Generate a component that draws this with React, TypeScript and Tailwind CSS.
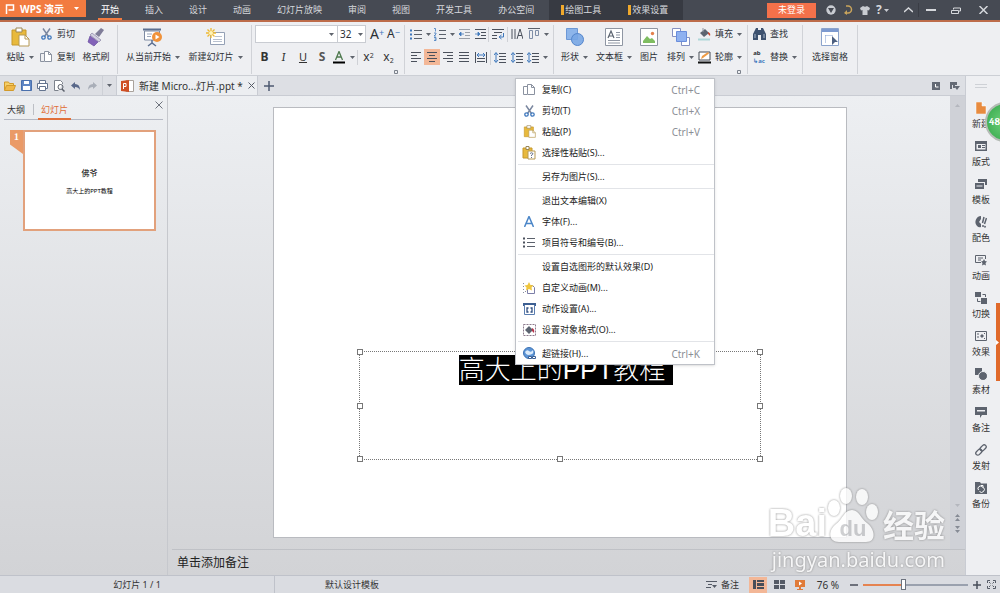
import type { ReactNode } from 'react';
import { useState } from 'react';

type SvgProps = { w: number; h: number; children: ReactNode; className?: string };

const Svg = ({ w, h, children, className = '' }: SvgProps) => (
  <svg width={w} height={h} viewBox={`0 0 ${w} ${h}`} fill="none" className={`shrink-0 ${className}`} aria-hidden="true">
    {children}
  </svg>
);

const Caret = ({ className = 'text-[#5f646d]' }: { className?: string }) => (
  <Svg w={5} h={3} className={className}>
    <path d="M0 0h5L2.500 3z" fill="currentColor" />
  </Svg>
);

const Divider = () => <div className="h-[15px] w-px shrink-0 bg-[#cfd1d6]" />;

/* ---------- Icons ---------- */

const PasteIcon = ({ size = 20 }: { size?: number }) => (
  <svg width={size} height={size} viewBox="0 0 20 20" fill="none" className="shrink-0" aria-hidden="true">
    <path d="M2 3h14v15H2z" fill="#e8b93c" stroke="#c6982a" />
    <path d="M6 1h6v4H6z" fill="#fff" stroke="#9a8756" />
    <path d="M9 8h6l4 4v7H9z" fill="#fff" stroke="#b79a55" />
    <path d="M15 8v4h4" stroke="#b79a55" />
  </svg>
);

const PasteSpecialIcon = () => (
  <Svg w={14} h={14}>
    <path d="M1 2h9v10H1z" fill="#e8b93c" stroke="#c6982a" />
    <path d="M4 .500h3v3H4z" fill="#fff" stroke="#9a8756" />
    <path d="M6 5h7v8H6z" fill="#fff" stroke="#b79a55" />
    <path d="M8 7.500q1.500-1.500 3 0q0 1-1.500 1.500v1M9.500 11v1" stroke="#69758c" />
  </Svg>
);

const ScissorsIcon = () => (
  <Svg w={11} h={12}>
    <path d="M2 0.500l5.500 8M9 0.500L3.500 8.500" stroke="#7b88a0" strokeWidth="1.500" />
    <circle cx="2.500" cy="9.500" r="1.700" stroke="#3f78bd" strokeWidth="1.300" />
    <circle cx="8.500" cy="9.500" r="1.700" stroke="#3f78bd" strokeWidth="1.300" />
  </Svg>
);

const CopyIcon = () => (
  <Svg w={12} h={12}>
    <path d="M4 2.500H.500v8H4" stroke="#8b92a0" />
    <path d="M4.500.500h4l3 3v7h-7z" fill="#fff" stroke="#8b92a0" />
    <path d="M8.500.500v3h3" stroke="#8b92a0" />
  </Svg>
);

const BrushIcon = () => (
  <Svg w={18} h={20}>
    <path d="M14 1l3 2-5 7-4-3z" fill="#7f7d98" />
    <path d="M5 6l9 7-2 2-9-7z" fill="#d3d0e2" stroke="#8a85a5" strokeWidth=".700" />
    <path d="M3 9l8 6-4 4-6-4z" fill="#8262b8" stroke="#6a4fa0" strokeWidth=".700" />
  </Svg>
);

const PlayFromIcon = () => (
  <Svg w={20} h={19}>
    <path d="M0 1.500h18" stroke="#5c6f91" strokeWidth="2" />
    <path d="M1.500 3v9h15V3z" fill="#fff" stroke="#7d8aa2" />
    <path d="M4 6h5M4 8.500h4" stroke="#9ba6ba" />
    <path d="M9 12v3M5 18l4-3 4 3" stroke="#5c6f91" strokeWidth="1.500" />
    <circle cx="14" cy="9" r="5" fill="#f0923a" />
    <path d="M12.500 6.500v5l4-2.500z" fill="#fff" />
  </Svg>
);

const NewSlideIcon = () => (
  <Svg w={20} h={18}>
    <path d="M4.500 4.500h14v12h-14z" fill="#fff" stroke="#94a0b5" />
    <path d="M9 8.500h7M7 11.500h9M7 13.500h9" stroke="#b9c1d0" />
    <path d="M5 0v10M0 5h10M1.500 1.500l7 7M8.500 1.500l-7 7" stroke="#eeb933" strokeWidth="1.300" />
    <circle cx="5" cy="5" r="2" fill="#fff4b8" />
  </Svg>
);

const ShapesIcon = () => (
  <Svg w={18} h={18}>
    <path d="M.500.500h11v11H.500z" fill="#8db5ea" stroke="#6c98d6" />
    <circle cx="11.500" cy="11.500" r="6" fill="#78a6e4" fillOpacity=".9" stroke="#5486cc" />
  </Svg>
);

const TextBoxIcon = () => (
  <Svg w={18} h={18}>
    <path d="M.500.500h17v17H.500z" fill="#fff" stroke="#8f96a3" />
    <path d="M3 10L6 3l3 7M4 8h4" stroke="#5c6470" strokeWidth="1.200" />
    <path d="M11 4.500h4M11 7h4M11 9.500h4M3 12.500h12M3 15h12" stroke="#8f96a3" />
  </Svg>
);

const PictureIcon = () => (
  <Svg w={18} h={18}>
    <path d="M.500.500h17v17H.500z" fill="#fff" stroke="#8f96a3" />
    <path d="M3 15v-2l4-5 3 3 2-1 3 3v2z" fill="#7fbd61" />
    <circle cx="12.500" cy="5.500" r="1.700" fill="#e4804c" />
  </Svg>
);

const ArrangeIcon = () => (
  <Svg w={18} h={18}>
    <path d="M.500.500h8v8h-8z" fill="#fff" stroke="#8591c2" />
    <path d="M9.500 9.500h8v8h-8z" fill="#fff" stroke="#8591c2" />
    <path d="M4.500 3.500h10v10h-10z" fill="#8fb1f0" stroke="#6a8ddb" />
  </Svg>
);

const FillIcon = () => (
  <Svg w={13} h={13}>
    <path d="M2 5l5-4 4 4-5 4z" fill="#5c6470" />
    <path d="M10 4q3 1 2 4l-2-2z" fill="#c6452f" />
    <path d="M5 0v4" stroke="#8f96a3" />
    <path d="M0 11.500h12" stroke="#aed6d9" strokeWidth="2" />
  </Svg>
);

const OutlineIcon = () => (
  <Svg w={13} h={13}>
    <path d="M1 1h11v8H1z" fill="#fff" stroke="#444a55" />
    <path d="M3 8l1-3 6-4 1 1.500-6 4.500z" fill="#ee9b45" />
    <path d="M0 11.500h13" stroke="#111" strokeWidth="2" />
  </Svg>
);

const BinocularsIcon = () => (
  <Svg w={13} h={12}>
    <path d="M3 0h2v2h3V0h2l3 6v6H8V7H5v5H0V6z" fill="#3d5270" />
    <path d="M2 6v4M11 6v4" stroke="#a9b7cb" />
  </Svg>
);

const SelectPaneIcon = () => (
  <Svg w={18} h={18}>
    <path d="M.500.500h17v17H.500z" fill="#fff" stroke="#8ba3cc" />
    <path d="M1 1h16v3H1z" fill="#7d9ad0" />
    <path d="M4.500 7.500h8M4.500 7.500v8" stroke="#7d9ad0" strokeDasharray="1 1" />
    <path d="M11 8l6 6h-3l-3 3z" fill="#4c5f80" />
  </Svg>
);

const LinesIcon = ({ mode }: { mode: 'left' | 'center' | 'right' | 'full' }) => {
  const x = { left: 0, center: 2, right: 4, full: 0 }[mode];
  const short = mode === 'full' ? 10 : 6;
  return (
    <Svg w={10} h={10}>
      <path
        d={`M0 .500h10M${x} 3.500h${short}M0 6.500h10M${x} 9.500h${short}`}
        stroke="#4b515c"
      />
    </Svg>
  );
};

const BulletsIcon = ({ dark = false }: { dark?: boolean }) => (
  <Svg w={12} h={11}>
    <path d="M4 1.500h8M4 5.500h8M4 9.500h8" stroke="#5b616c" />
    <path d="M0 1.500h2M0 5.500h2M0 9.500h2" stroke={dark ? '#4b515c' : '#3f78bd'} strokeWidth="2" />
  </Svg>
);

const NumbersIcon = () => (
  <Svg w={12} h={13}>
    <path d="M5 2.500h7M5 6.500h7M5 10.500h7" stroke="#5b616c" />
    <path d="M0 .500h1.500v3M0 5h2v1l-2 2h2M0 9.500h2v3H0M.500 11H2" stroke="#3f78bd" strokeWidth=".800" />
  </Svg>
);

const IndentIcon = ({ inward = false }: { inward?: boolean }) => (
  <Svg w={11} h={11} className={inward ? 'text-[#4b515c]' : 'text-[#9a9fa8]'}>
    <path d="M0 .500h11M6 3.500h5M6 6.500h5M0 9.500h11" stroke="currentColor" />
    <path d={inward ? 'M0 5h3M3 3l2 2-2 2z' : 'M2 5h3M2 3L0 5l2 2z'} stroke="#3f78bd" strokeWidth=".800" fill="#3f78bd" />
  </Svg>
);

const WrapIcon = () => (
  <Svg w={12} h={11}>
    <path d="M0 .500h12M2 3.500h8M0 6.500h5M0 9.500h5" stroke="#4b515c" />
    <path d="M11.500 4v4H8M9.500 6L7 8l2.500 2" stroke="#3f78bd" />
  </Svg>
);

const TextDirectionIcon = () => (
  <Svg w={12} h={12}>
    <path d="M1 1v10M4 1v10" stroke="#4b515c" />
    <path d="M6 11l3-10 3 10M7 7.500h4" stroke="#4b515c" />
  </Svg>
);

const VerticalAlignIcon = () => (
  <Svg w={12} h={12}>
    <path d="M0 .500h12" stroke="#5b616c" />
    <path d="M1.500 2.500h3v8h-3zM7.500 2.500h3v5h-3z" stroke="#7f8ea8" />
  </Svg>
);

const DistributeIcon = () => (
  <Svg w={12} h={11}>
    <path d="M.500 0v11M11.500 0v11M2 6.500h8M2 9.500h8" stroke="#4b515c" />
    <path d="M2 3h8M4 1L2 3l2 2M8 1l2 2-2 2" stroke="#3f78bd" />
  </Svg>
);

const SpacingIcon = () => (
  <Svg w={12} h={11}>
    <path d="M5 1.500h7M5 4.500h7M5 7.500h7M5 10.500h7" stroke="#4b515c" />
    <path d="M2 1v9M0 3l2-2.500L4 3M0 8l2 2.500L4 8" stroke="#3f78bd" />
  </Svg>
);

const LauncherIcon = () => (
  <Svg w={4} h={4}>
    <path d="M.500 3.500v-3h3v3z" stroke="#7c828c" />
  </Svg>
);

/* ---------- Title bar ---------- */

const menuTabs = ['插入', '设计', '动画', '幻灯片放映', '审阅', '视图', '开发工具', '办公空间'];

const TitleBar = () => (
  <header className="flex h-[22px] shrink-0 items-stretch border-b-2 border-[#bd6c4a] bg-[#464a53] text-[#d6d8dc]">
    <button className="flex h-[17px] w-[86px] shrink-0 items-center bg-[#f27b40] pl-[5px] text-[10px] font-bold text-white">
      <Svg w={10} h={10}>
        <path d="M1.500 10V1h7v5h-5" stroke="#fff" strokeWidth="1.500" />
      </Svg>
      <span className="ml-[5px] whitespace-nowrap">WPS 演示</span>
      <Caret className="ml-[10px] text-white" />
    </button>
    <nav className="ml-[2px] flex items-stretch whitespace-nowrap">
      <a href="#home" className="flex items-stretch px-[10px] text-white">
        <span className="flex items-center border-y-2 border-t-transparent border-b-[#f27b40] px-[3px]">开始</span>
      </a>
      {menuTabs.map((tab) => (
        <a key={tab} href="#tab" className="flex items-center px-[13px]">
          {tab}
        </a>
      ))}
      <div className="ml-[2px] flex items-stretch bg-[#373a42] px-3">
        {['绘图工具', '效果设置'].map((tab) => (
          <a key={tab} href="#tool" className="flex w-[67px] items-center last:w-[43px]">
            <span className="mr-px h-[10px] w-[3px] bg-[#f0a92c]" />
            {tab}
          </a>
        ))}
      </div>
    </nav>
    <div className="ml-auto flex h-5 items-center pr-3">
      <button className="mr-[6px] h-[15px] w-[49px] bg-[#f4714a] text-white">未登录</button>
      <button aria-label="皮肤中心" className="flex w-[17px] justify-center">
        <Svg w={10} h={10}>
          <circle cx="5" cy="5" r="4.700" fill="#c9ccd2" />
          <path d="M2 3h6L5 8z" fill="#464a53" />
        </Svg>
      </button>
      <button aria-label="同步" className="flex w-[17px] justify-center">
        <Svg w={10} h={10}>
          <path d="M3 1h2a3.500 3.500 0 110 7H2" stroke="#c9a45c" strokeWidth="1.500" />
          <path d="M4 5L1 8l3 2z" fill="#c9a45c" />
        </Svg>
      </button>
      <button aria-label="换肤" className="flex w-[17px] justify-center">
        <Svg w={10} h={10}>
          <path d="M3 1q2 1.500 4 0l3 2-1 2.500-1.500-.500v5h-5V5L1 5.500 0 3z" fill="#c9ccd2" />
        </Svg>
      </button>
      <button aria-label="帮助" className="flex w-[25px] items-center gap-[2px] pl-[3px] text-[12px] font-bold">
        ?<Caret className="text-[#c9ccd2]" />
      </button>
      <button aria-label="折叠功能区" className="flex w-[20px] justify-center">
        <Svg w={9} h={6}>
          <path d="M0 5l4.500-4L9 5" stroke="#d6d8dc" strokeWidth="1.500" />
        </Svg>
      </button>
      <button aria-label="最小化" className="flex h-[14px] w-[25px] items-center justify-center border-l border-[#3a3d45]">
        <Svg w={10} h={2}>
          <path d="M0 1h10" stroke="#d6d8dc" strokeWidth="2" />
        </Svg>
      </button>
      <button aria-label="还原" className="flex w-[26px] justify-center">
        <Svg w={10} h={7}>
          <path d="M2.500 2.500V1h7v3H8M.500 3.500h7v3h-7z" stroke="#d6d8dc" />
        </Svg>
      </button>
      <button aria-label="关闭" className="flex w-[19px] justify-end">
        <Svg w={9} h={8}>
          <path d="M.500 0l8 8M8.500 0l-8 8" stroke="#d6d8dc" strokeWidth="1.500" />
        </Svg>
      </button>
    </div>
  </header>
);

/* ---------- Ribbon ---------- */

const Group = ({ children }: { children: ReactNode }) => (
  <div className="relative flex h-[49px] shrink-0 items-start border-r border-[#d0d2d7]">{children}</div>
);

type BigProps = { icon: ReactNode; label: string; arrow?: boolean; className: string };

const BigButton = ({ icon, label, arrow = false, className }: BigProps) => (
  <button className={`flex shrink-0 flex-col items-center ${className}`}>
    <span className="flex h-6 items-center">{icon}</span>
    <span className="flex items-center gap-1 whitespace-nowrap pt-[2px]">
      {label}
      {arrow && <Caret />}
    </span>
  </button>
);

const SmallButton = ({ icon, label, arrow = false }: { icon: ReactNode; label: string; arrow?: boolean }) => (
  <button className="flex h-[18px] items-center whitespace-nowrap">
    <span className="flex w-[14px] justify-center">{icon}</span>
    <span className="ml-1">{label}</span>
    {arrow && <span className="ml-1"><Caret /></span>}
  </button>
);

const Tool = ({ label, className = 'w-4', children }: { label: string; className?: string; children: ReactNode }) => (
  <button aria-label={label} className={`flex h-4 shrink-0 items-center justify-center ${className}`}>
    {children}
  </button>
);

const Launcher = () => (
  <button aria-label="更多设置" className="absolute right-[6px] bottom-0">
    <LauncherIcon />
  </button>
);

const Ribbon = () => (
  <div className="flex h-[54px] shrink-0 items-start overflow-hidden border-b border-[#cccfd5] bg-[#eeeff2] pt-[3px]">
    <Group>
      <BigButton icon={<PasteIcon />} label="粘贴" arrow className="w-[40px]" />
      <div className="flex w-[35px] flex-col gap-[5px]">
        <SmallButton icon={<ScissorsIcon />} label="剪切" />
        <SmallButton icon={<CopyIcon />} label="复制" />
      </div>
      <BigButton icon={<BrushIcon />} label="格式刷" className="w-[42px]" />
    </Group>
    <Group>
      <BigButton icon={<PlayFromIcon />} label="从当前开始" arrow className="ml-1 w-[62px]" />
      <BigButton icon={<NewSlideIcon />} label="新建幻灯片" arrow className="mr-1 w-[63px]" />
    </Group>
    <Group>
      <div className="flex w-[152px] flex-col gap-[5px] pl-[3px]">
        <div className="flex h-[18px] items-center text-[10px]">
          <div className="relative">
            <select aria-label="字体" className="h-[18px] w-[83px] appearance-none border border-[#c9ccd2] bg-white pl-1">
              <option> </option>
            </select>
            <span className="pointer-events-none absolute top-2 right-1"><Caret /></span>
          </div>
          <div className="relative">
            <select aria-label="字号" className="h-[18px] w-[28px] appearance-none border border-l-0 border-[#c9ccd2] bg-white pl-[2px]">
              <option>32</option>
            </select>
            <span className="pointer-events-none absolute top-2 right-[3px]"><Caret /></span>
          </div>
          <button aria-label="增大字号" className="ml-1 flex text-[14px]">
            A<sup className="top-0 text-[9px] leading-[9px] text-[#3f78bd]">+</sup>
          </button>
          <button aria-label="减小字号" className="ml-[3px] flex text-[12px]">
            A<sup className="top-0 text-[9px] leading-[9px] text-[#3f78bd]">−</sup>
          </button>
        </div>
        <div className="flex h-[18px] items-center text-[12px] text-[#333]">
          <button className="w-[19px] font-bold">B</button>
          <button className="w-[19px] font-serif italic">I</button>
          <button className="w-[20px] text-[11px] underline">U</button>
          <button className="w-[18px] font-bold text-[#555]">S</button>
          <Tool label="字体颜色" className="w-[16px]">
            <Svg w={12} h={13}>
              <path d="M2.500 9L6 .500 9.500 9M4 6h4" stroke="#4f7a4f" strokeWidth="1.300" />
              <path d="M0 11.500h12" stroke="#000" strokeWidth="2" />
            </Svg>
          </Tool>
          <Tool label="颜色" className="w-[10px]"><Caret /></Tool>
          <Divider />
          <button className="w-[21px]">x<sup className="text-[7px]">2</sup></button>
          <button className="w-[19px]">x<sub className="text-[7px]">2</sub></button>
        </div>
      </div>
      <Launcher />
    </Group>
    <Group>
      <div className="flex w-[148px] flex-col gap-[5px] pl-[3px]">
        <div className="flex h-[18px] items-center">
          <Tool label="项目符号"><BulletsIcon /></Tool>
          <Tool label="项目符号选项" className="w-2"><Caret /></Tool>
          <Tool label="编号"><NumbersIcon /></Tool>
          <Tool label="编号选项" className="w-2"><Caret /></Tool>
          <Tool label="减少缩进"><IndentIcon /></Tool>
          <Tool label="增加缩进"><IndentIcon inward /></Tool>
          <Divider />
          <Tool label="换行" className="w-[18px]"><WrapIcon /></Tool>
          <Divider />
          <Tool label="文字方向" className="w-[18px]"><TextDirectionIcon /></Tool>
          <Tool label="对齐文本"><VerticalAlignIcon /></Tool>
          <Tool label="对齐选项" className="w-2"><Caret /></Tool>
        </div>
        <div className="flex h-[18px] items-center">
          <Tool label="左对齐"><LinesIcon mode="left" /></Tool>
          <Tool label="居中" className="w-4 bg-[#f3b797]"><LinesIcon mode="center" /></Tool>
          <Tool label="右对齐"><LinesIcon mode="right" /></Tool>
          <Tool label="两端对齐"><LinesIcon mode="full" /></Tool>
          <Tool label="分散对齐" className="w-[18px]"><DistributeIcon /></Tool>
          <Divider />
          <Tool label="段落间距" className="w-[18px]"><SpacingIcon /></Tool>
          <Tool label="行距"><SpacingIcon /></Tool>
          <Tool label="间距"><SpacingIcon /></Tool>
          <Tool label="间距选项" className="w-2"><Caret /></Tool>
        </div>
      </div>
    </Group>
    <Group>
      <BigButton icon={<ShapesIcon />} label="形状" arrow className="w-[41px]" />
      <BigButton icon={<TextBoxIcon />} label="文本框" arrow className="w-[38px]" />
      <BigButton icon={<PictureIcon />} label="图片" className="w-[32px]" />
      <BigButton icon={<ArrangeIcon />} label="排列" arrow className="w-[31px]" />
      <div className="flex w-[51px] flex-col gap-[5px] pl-px">
        <SmallButton icon={<FillIcon />} label="填充" arrow />
        <SmallButton icon={<OutlineIcon />} label="轮廓" arrow />
      </div>
      <Launcher />
    </Group>
    <Group>
      <div className="flex w-[54px] flex-col gap-[5px] pl-1">
        <SmallButton icon={<BinocularsIcon />} label="查找" />
        <SmallButton
          icon={
            <span className="flex flex-col text-[6px] leading-[8px] font-bold">
              <span className="text-left">ab</span>
              <span className="text-[#3f78bd]">↳ac</span>
            </span>
          }
          label="替换"
          arrow
        />
      </div>
    </Group>
    <Group>
      <BigButton icon={<SelectPaneIcon />} label="选择窗格" className="w-[54px]" />
    </Group>
  </div>
);

/* ---------- Document tabs ---------- */

const DocumentBar = () => (
  <div className="flex h-5 shrink-0 items-stretch border-b border-[#c9ccd3] bg-[#dddfe4]">
    <div className="flex w-[117px] shrink-0 items-center border-r border-[#c9ccd3] pl-[2px]">
      <Tool label="打开" className="w-4">
        <Svg w={12} h={10}>
          <path d="M.500 9V1h4l1 1.500h4V4" fill="#f5cf68" stroke="#d29a2b" />
          <path d="M2.500 4.500h9l-2 5h-9z" fill="#f0b848" stroke="#d29a2b" />
        </Svg>
      </Tool>
      <Tool label="保存" className="w-4">
        <Svg w={11} h={11}>
          <path d="M.500.500h10v10H.500z" fill="#5f86c4" stroke="#4a70ad" />
          <path d="M3 1h5v3H3zM2 6h7v4H2z" fill="#fff" />
        </Svg>
      </Tool>
      <Tool label="打印" className="w-[17px]">
        <Svg w={11} h={11}>
          <path d="M2.500 3V.500h6V3M.500 3.500h10v5H.500z" fill="#fff" stroke="#64748f" />
          <path d="M2.500 6.500h6v4h-6z" fill="#fff" stroke="#64748f" />
        </Svg>
      </Tool>
      <Tool label="打印预览" className="w-4">
        <Svg w={11} h={12}>
          <path d="M8.500 4V2.500l-2-2h-6v10h4" fill="#fff" stroke="#7c828c" />
          <circle cx="6.500" cy="7" r="2.500" stroke="#5b616c" />
          <path d="M8 9l2.500 2.500" stroke="#5b616c" strokeWidth="1.500" />
        </Svg>
      </Tool>
      <Tool label="撤销" className="w-4">
        <Svg w={9} h={8}>
          <path d="M4 0v2q5 0 5 6-1.500-3-5-3v2L0 3.500z" fill="#59688a" />
        </Svg>
      </Tool>
      <Tool label="恢复" className="w-[18px]">
        <Svg w={9} h={8}>
          <path d="M5 0v2Q0 2 0 8q1.500-3 5-3v2l4-3.500z" fill="#a9aeb8" />
        </Svg>
      </Tool>
      <div className="ml-px flex h-full w-[15px] items-center justify-center border-l border-[#cdd0d6]"><Caret /></div>
    </div>
    <div className="flex w-[141px] shrink-0 items-center gap-[5px] border-r border-[#c9ccd3] bg-[#eceef1] pl-1">
      <Svg w={13} h={12}>
        <path d="M5 .500h7.500v11H5z" fill="#fff" stroke="#a9a29c" />
        <path d="M0 1l8-1v12l-8-1z" fill="#cf4f25" />
        <path d="M2.500 9V3.500h2.500v3H2.500" stroke="#fff" />
      </Svg>
      <span className="whitespace-nowrap text-[10px] text-[#333]">新建 Micro...灯片.ppt *</span>
      <button aria-label="关闭文档" className="mr-1 ml-auto">
        <Svg w={7} h={7}>
          <path d="M.500.500l6 6M6.500.500l-6 6" stroke="#555b66" />
        </Svg>
      </button>
    </div>
    <button aria-label="新建文档" className="ml-[6px]">
      <Svg w={10} h={10}>
        <path d="M5 0v10M0 5h10" stroke="#4d5a70" strokeWidth="1.500" />
      </Svg>
    </button>
    <div className="mr-[5px] ml-auto flex items-center gap-[10px]">
      <Svg w={8} h={8}>
        <path d="M0 0h8v8H0z" fill="#646a75" />
        <path d="M3.500 2v3h3" stroke="#fff" />
      </Svg>
      <Svg w={10} h={8}>
        <path d="M0 0h7v3H5v3H3V3H2v4H0z" fill="#646a75" />
        <path d="M4 4h6L7 8z" fill="#646a75" />
      </Svg>
    </div>
  </div>
);

/* ---------- Slide list ---------- */

const SlidePanel = () => (
  <aside className="flex w-[168px] shrink-0 flex-col border-r border-[#c6c8cd]">
    <div className="mr-1 ml-1 flex h-[24px] items-stretch border-b border-[#b5b9c4] text-[#333]">
      <button className="px-[3px] pt-1">大纲</button>
      <div className="mt-2 ml-[5px] h-[11px] w-px bg-[#bcbfc5]" />
      <button className="-mb-px ml-1 border-b-2 border-[#e0703a] px-[3px] pt-[5px] text-[#e0703a]">幻灯片</button>
      <button aria-label="关闭窗格" className="mb-[6px] ml-auto">
        <Svg w={8} h={8}>
          <path d="M.500.500l7 7M7.500.500l-7 7" stroke="#6d727c" />
        </Svg>
      </button>
    </div>
    <div className="mt-[10px] flex pr-[11px] pl-[10px]">
      <div className="h-6 w-[13px] bg-[#ea9a67] text-center font-serif text-[9px] font-bold leading-[14px] text-white [clip-path:polygon(0_0,100%_0,100%_100%,0_60%)]">
        1
      </div>
      <button className="flex aspect-[133/101] flex-1 flex-col items-center justify-center gap-2 border-2 border-[#e2a17c] bg-white pt-[3px] text-black">
        <span className="text-[8px] leading-[10px]">佛爷</span>
        <span className="text-[6px] leading-[10px]">高大上的PPT教程</span>
      </button>
    </div>
  </aside>
);

/* ---------- Context menu ---------- */

const menuGroups: { label: string; keys?: string; icon?: ReactNode }[][] = [
  [
    { label: '复制(C)', keys: 'Ctrl+C', icon: <CopyIcon /> },
    { label: '剪切(T)', keys: 'Ctrl+X', icon: <ScissorsIcon /> },
    { label: '粘贴(P)', keys: 'Ctrl+V', icon: <PasteIcon size={13} /> },
    { label: '选择性粘贴(S)...', icon: <PasteSpecialIcon /> },
  ],
  [{ label: '另存为图片(S)...' }],
  [
    { label: '退出文本编辑(X)' },
    {
      label: '字体(F)...',
      icon: (
        <Svg w={10} h={11}>
          <path d="M.500 11L5 .500 9.500 11M2.500 7.500h5" stroke="#4b86c8" strokeWidth="1.500" />
        </Svg>
      ),
    },
    { label: '项目符号和编号(B)...', icon: <BulletsIcon dark /> },
  ],
  [
    { label: '设置自选图形的默认效果(D)' },
    {
      label: '自定义动画(M)...',
      icon: (
        <Svg w={13} h={12}>
          <path d="M4.500 3.500h5l2 2v6h-7z" fill="#fff" stroke="#7d7fa8" />
          <path d="M6 0l1.500 3 3 .500-2 2 .500 3L6 7 3 8.500l.500-3-2-2 3-.500z" fill="#f0c63e" />
          <path d="M.500 1v10M2.500 9v3" stroke="#8a8fa0" strokeDasharray="1 2" />
        </Svg>
      ),
    },
    {
      label: '动作设置(A)...',
      icon: (
        <Svg w={13} h={12}>
          <path d="M0 1.500h13" stroke="#3d5f92" strokeWidth="3" />
          <path d="M1.500 2v9.500h10V2" stroke="#5b7eb0" fill="#fff" />
          <path d="M5.500 5H4v4h1.500M7.500 5H9v4H7.500" stroke="#2f4e80" strokeWidth="1.300" />
        </Svg>
      ),
    },
    {
      label: '设置对象格式(O)...',
      icon: (
        <Svg w={13} h={12}>
          <path d="M.500.500h12v11H.500z" stroke="#8d7b8d" strokeDasharray="2 1" />
          <path d="M2 6l4-4 4 4-4 4z" fill="#5c6470" />
          <path d="M9 4q3 1 2 5l-2-2z" fill="#b8334a" />
        </Svg>
      ),
    },
  ],
  [
    {
      label: '超链接(H)...',
      keys: 'Ctrl+K',
      icon: (
        <Svg w={13} h={13}>
          <circle cx="6" cy="6" r="5.500" fill="#5d95d6" stroke="#3c72b4" />
          <path d="M2 5q2-3 4-1t4-1q1 3-1 4T5 8 2 5z" fill="#dcebfa" />
          <path d="M5.500 9.500h3v2h-3zM9.500 9.500h3v2h-3z" stroke="#3a5f93" fill="#fff" />
        </Svg>
      ),
    },
  ],
];

const ContextMenu = () => (
  <div role="menu" className="absolute top-[78px] left-[515px] z-20 w-[200px] border border-[#bfc2c8] bg-white text-[#222] shadow-sm">
    {menuGroups.map((group, i) => (
      <div key={i}>
        {i > 0 && <div className="my-px ml-[2px] h-px bg-[#e2e4e8]" />}
        {group.map((item) => (
          <button key={item.label} role="menuitem" className="flex h-[21px] w-full items-center pr-[14px] text-left">
            <span className="flex w-[26px] justify-center">{item.icon}</span>
            <span className="whitespace-nowrap">{item.label}</span>
            {item.keys && <span className="ml-auto text-[10px] text-[#8b8f96]">{item.keys}</span>}
          </button>
        ))}
      </div>
    ))}
  </div>
);

/* ---------- Slide ---------- */

const handles = [
  'top-0 left-0',
  'top-0 left-full',
  'top-1/2 left-0',
  'top-1/2 left-full',
  'top-full left-0',
  'top-full left-1/2',
  'top-full left-full',
];

const Slide = () => (
  <div className="relative mt-[11px] aspect-[4/3] w-[574px] max-w-full self-start border border-[#b9bbc0] bg-white">
    <div className="absolute top-[57%] right-[15%] bottom-[18%] left-[15%] -m-px border border-dotted border-[#777]">
      <p className="mt-[2px] pl-3 text-center text-[26px] leading-[30px]">
        <span className="inline-block whitespace-pre bg-black pr-2 font-['Liberation_Sans','Noto_Sans_CJK_SC',sans-serif] font-light text-white">
          高大上的PPT教程
        </span>
      </p>
      {handles.map((pos) => (
        <span key={pos} className={`absolute size-[6px] -translate-1/2 border border-[#777] bg-white ${pos}`} />
      ))}
    </div>
  </div>
);

const Watermark = () => (
  <div className="pointer-events-none absolute right-[20px] bottom-0 flex flex-col text-white opacity-80 drop-shadow-[0_0_1px_#777]">
    <div className="flex h-[56px] items-end whitespace-nowrap font-bold">
      <span className="font-['Liberation_Sans',sans-serif] text-[38px] leading-[40px]">Bai</span>
      <div className="relative flex h-[56px] w-[52px] items-end justify-center">
        <svg viewBox="0 0 52 56" className="absolute inset-0 h-full w-full" fill="currentColor" aria-hidden="true">
          <ellipse cx="7" cy="21" rx="6" ry="8" />
          <ellipse cx="19" cy="9" rx="6" ry="8" />
          <ellipse cx="35" cy="10" rx="6" ry="8" />
          <ellipse cx="45" cy="25" rx="6" ry="8" />
          <path d="M25 23c7 0 9 9 15 13 8 6 10 19-1 19H12C1 55 1 43 9 37c7-5 8-14 16-14z" />
        </svg>
        <span className="relative font-['Liberation_Sans',sans-serif] text-[22px] leading-[28px] text-[#c4c5c8]">du</span>
      </div>
      <span className="ml-1 text-[31px] leading-[36px]">经验</span>
    </div>
    <span className="self-end pt-[2px] text-[20px] leading-[30px]">jingyan.baidu.com</span>
  </div>
);

const Workspace = () => (
  <main className="relative flex min-w-0 flex-1 flex-col">
    <div className="flex min-h-0 flex-1">
      <div className="flex min-w-0 flex-1 justify-center pl-[2px]">
        <Slide />
      </div>
      <div className="flex w-[15px] shrink-0 flex-col items-center justify-between bg-[#cfd1d7] pt-2 pb-4">
        <Svg w={5} h={3}>
          <path d="M0 3L2.500 0 5 3z" fill="#b4b7be" />
        </Svg>
        <Svg w={5} h={29}>
          <path d="M0 0h5L2.500 3z" fill="#b4b7be" />
          <path d="M0 13l2.500-3L5 13zM0 17l2.500-3L5 17zM0 22h5l-2.500 3zM0 26h5l-2.500 3z" fill="#868b95" />
        </Svg>
      </div>
    </div>
    <div className="ml-1 flex h-[26px] shrink-0 items-center border-t border-[#bfc1c6] pl-[5px] text-[12px] text-[#222]">
      单击添加备注
    </div>
    <Watermark />
  </main>
);

/* ---------- Side toolbar ---------- */

const sideTools: { label: string; icon: ReactNode }[] = [
  { label: '新建', icon: <path d="M1 0h6l4 4v8H1z M7 0v4h4" fill="#e88b3f" stroke="#fff" strokeWidth=".500" /> },
  {
    label: '版式',
    icon: <path d="M0 1h12v10H0zM1.500 4v5.500h9V4zM3 5h3v3H3zM7 5h3v1H7zM7 7h3v1H7z" fill="currentColor" fillRule="evenodd" />,
  },
  {
    label: '模板',
    icon: <path d="M3 1h9v6h-2V4H3zM0 5h9v6H0zM1.500 7.500v1h6v-1z" fill="currentColor" fillRule="evenodd" />,
  },
  {
    label: '配色',
    icon: (
      <>
        <path d="M6 0a6 6 0 00-4 10q2 2 4 1V8L4 6l2-3z" fill="currentColor" />
        <path d="M9 1L7.500 7M11.500 2L9.500 8M8 9v2M10.500 10l-1 1.500" stroke="currentColor" strokeWidth="1.500" />
      </>
    ),
  },
  {
    label: '动画',
    icon: (
      <>
        <path d="M6 8.500H.500v-7h10V5M3 4h5M3 6h3" stroke="currentColor" />
        <path d="M9 5l1 2 2 .500-1.500 1.500.500 2.500-2-1-2 1 .500-2.500L6 7.500 8 7z" fill="currentColor" />
      </>
    ),
  },
  {
    label: '切换',
    icon: (
      <>
        <path d="M0 0h6v5H0zM6 6h6v6H6z" fill="currentColor" />
        <path d="M7.500 2.500h3V5M2.500 6.500v3h3" stroke="currentColor" />
      </>
    ),
  },
  {
    label: '效果',
    icon: (
      <>
        <path d="M.500 1.500h11v9H.500z" stroke="currentColor" />
        <path d="M3 3v6M9.500 3v1M9.500 8v1" stroke="currentColor" strokeDasharray="2 1" />
        <path d="M5 6l2-2 2 2-2 2z" fill="currentColor" />
      </>
    ),
  },
  {
    label: '素材',
    icon: (
      <>
        <path d="M0 0h7v7H0z" fill="currentColor" />
        <circle cx="8" cy="8" r="4.500" fill="currentColor" stroke="#eeeff2" />
      </>
    ),
  },
  { label: '备注', icon: <path d="M0 1h12v8H7l-2 3V9H0zM2 4v1.500h8V4z" fill="currentColor" fillRule="evenodd" /> },
  {
    label: '发射',
    icon: (
      <g transform="rotate(-45 6 6)" stroke="currentColor" strokeWidth="1.300">
        <rect x="-.500" y="4" width="7" height="4" rx="2" />
        <rect x="5.500" y="4" width="7" height="4" rx="2" />
      </g>
    ),
  },
  {
    label: '备份',
    icon: (
      <>
        <path d="M0 0h5l1 1.500h6V12H0z" fill="currentColor" />
        <path d="M3.500 8a2.500 2.500 0 014-3M8.500 5.500a2.500 2.500 0 01-4 4M6 3.500h2V6" stroke="#fff" />
      </>
    ),
  },
];

const SideBar = () => (
  <aside className="relative flex w-[35px] shrink-0 flex-col items-center border-l border-[#c9ccd3] bg-[#eeeff2] pt-2 pr-1">
    <div className="mb-[14px] h-1 w-3 border-y border-[#ced1d6]" />
    {sideTools.map((tool) => (
      <button key={tool.label} className="flex h-[38px] flex-col items-center text-[#5d636e]">
        <Svg w={12} h={12}>{tool.icon}</Svg>
        <span className="mt-1 whitespace-nowrap text-[#333]">{tool.label}</span>
      </button>
    ))}
    <div className="absolute top-[26px] -right-[25px] flex size-10 items-center rounded-full border-2 border-[#b5bcb6] bg-radial from-[#6fd37c] to-[#2fa549] pl-[2px] font-serif text-[10px] font-bold text-white">
      48
    </div>
    <div className="absolute top-[227px] right-0 flex h-[78px] w-1 items-center bg-[#e0692a] text-white">
      <Svg w={4} h={5}>
        <path d="M0 0l3 2.500L0 5z" fill="currentColor" />
      </Svg>
    </div>
  </aside>
);

/* ---------- Status bar ---------- */

const StatusBar = () => {
  const [zoom, setZoom] = useState(38);

  return (
    <footer className="flex h-[18px] shrink-0 items-center border-t border-[#bfc2ca] bg-[#dadce1] text-[#333]">
      <div className="h-full w-[275px] border-r border-[#bfc2ca] text-center leading-[17px]">幻灯片 1 / 1</div>
      <span className="ml-[50px] whitespace-nowrap">默认设计模板</span>
      <div className="ml-auto flex items-center pr-[3px]">
        <button className="mr-[10px] flex items-center gap-1">
          <Svg w={11} h={9}>
            <path d="M0 1.500h11M2 4.500h4M0 7.500h5" stroke="#555b66" />
            <path d="M6 5h5L8.500 8z" fill="#555b66" />
          </Svg>
          备注
        </button>
        <Tool label="普通视图" className="w-[18px] bg-[#f3b797]">
          <Svg w={11} h={9}>
            <path d="M0 0h3v9H0zM4 0h7v2H4zM4 3h7v3H4zM4 7h7v2H4z" fill="#484e59" />
          </Svg>
        </Tool>
        <Tool label="幻灯片浏览" className="w-[24px]">
          <Svg w={11} h={9}>
            <path d="M0 0h5v4H0zM6 0h5v4H6zM0 5h5v4H0zM6 5h5v4H6z" fill="#555b66" />
          </Svg>
        </Tool>
        <Tool label="播放" className="w-[18px]">
          <Svg w={10} h={10}>
            <path d="M0 0h10v7H0zM4 7h2v2h2v1H2V9h2z" fill="#e07b39" />
            <path d="M4 1.500v4l3-2z" fill="#fff" />
          </Svg>
        </Tool>
        <span className="w-[38px] text-center text-[10px]">76 %</span>
        <Tool label="缩小" className="w-[13px]">
          <Svg w={8} h={2}><path d="M0 1h8" stroke="#484e59" strokeWidth="1.500" /></Svg>
        </Tool>
        <input
          type="range"
          aria-label="显示比例"
          min={0}
          max={100}
          value={zoom}
          onChange={(e) => setZoom(Number(e.target.value))}
          className="mr-1 ml-[3px] h-[11px] w-[105px] appearance-none bg-[length:100%_2px] bg-center bg-no-repeat [&::-webkit-slider-thumb]:h-[11px] [&::-webkit-slider-thumb]:w-[5px] [&::-webkit-slider-thumb]:appearance-none [&::-webkit-slider-thumb]:border [&::-webkit-slider-thumb]:border-[#6d737e] [&::-webkit-slider-thumb]:bg-white"
          style={{ backgroundImage: `linear-gradient(to right, #e58350 ${zoom}%, #9aa1ae ${zoom}%)` }}
        />
        <Tool label="放大" className="w-[10px]">
          <Svg w={8} h={8}><path d="M4 0v8M0 4h8" stroke="#484e59" strokeWidth="1.500" /></Svg>
        </Tool>
        <Tool label="适应窗口" className="ml-[3px] w-3">
          <Svg w={9} h={9}>
            <path d="M.500 3V.500H3M6 .500h2.500V3M8.500 6v2.500H6M3 8.500H.500V6M2 2l1.500 1.500M7 2L5.500 3.500M7 7L5.500 5.500M2 7l1.500-1.500" stroke="#555b66" />
          </Svg>
        </Tool>
      </div>
    </footer>
  );
};

const App = () => (
  <div className="relative flex h-screen flex-col overflow-hidden bg-[#dddfe3] font-['Noto_Sans','Noto_Sans_CJK_SC',sans-serif] text-[9px] leading-[12px] text-[#2c2f36]">
    <TitleBar />
    <Ribbon />
    <div className="flex min-h-0 flex-1">
      <div className="flex min-w-0 flex-1 flex-col">
        <DocumentBar />
        <div className="flex min-h-0 flex-1 bg-linear-to-b from-[#edeff2] to-[#d2d3d6]">
          <SlidePanel />
          <Workspace />
        </div>
      </div>
      <SideBar />
    </div>
    <StatusBar />
    <ContextMenu />
  </div>
);

export default App;
